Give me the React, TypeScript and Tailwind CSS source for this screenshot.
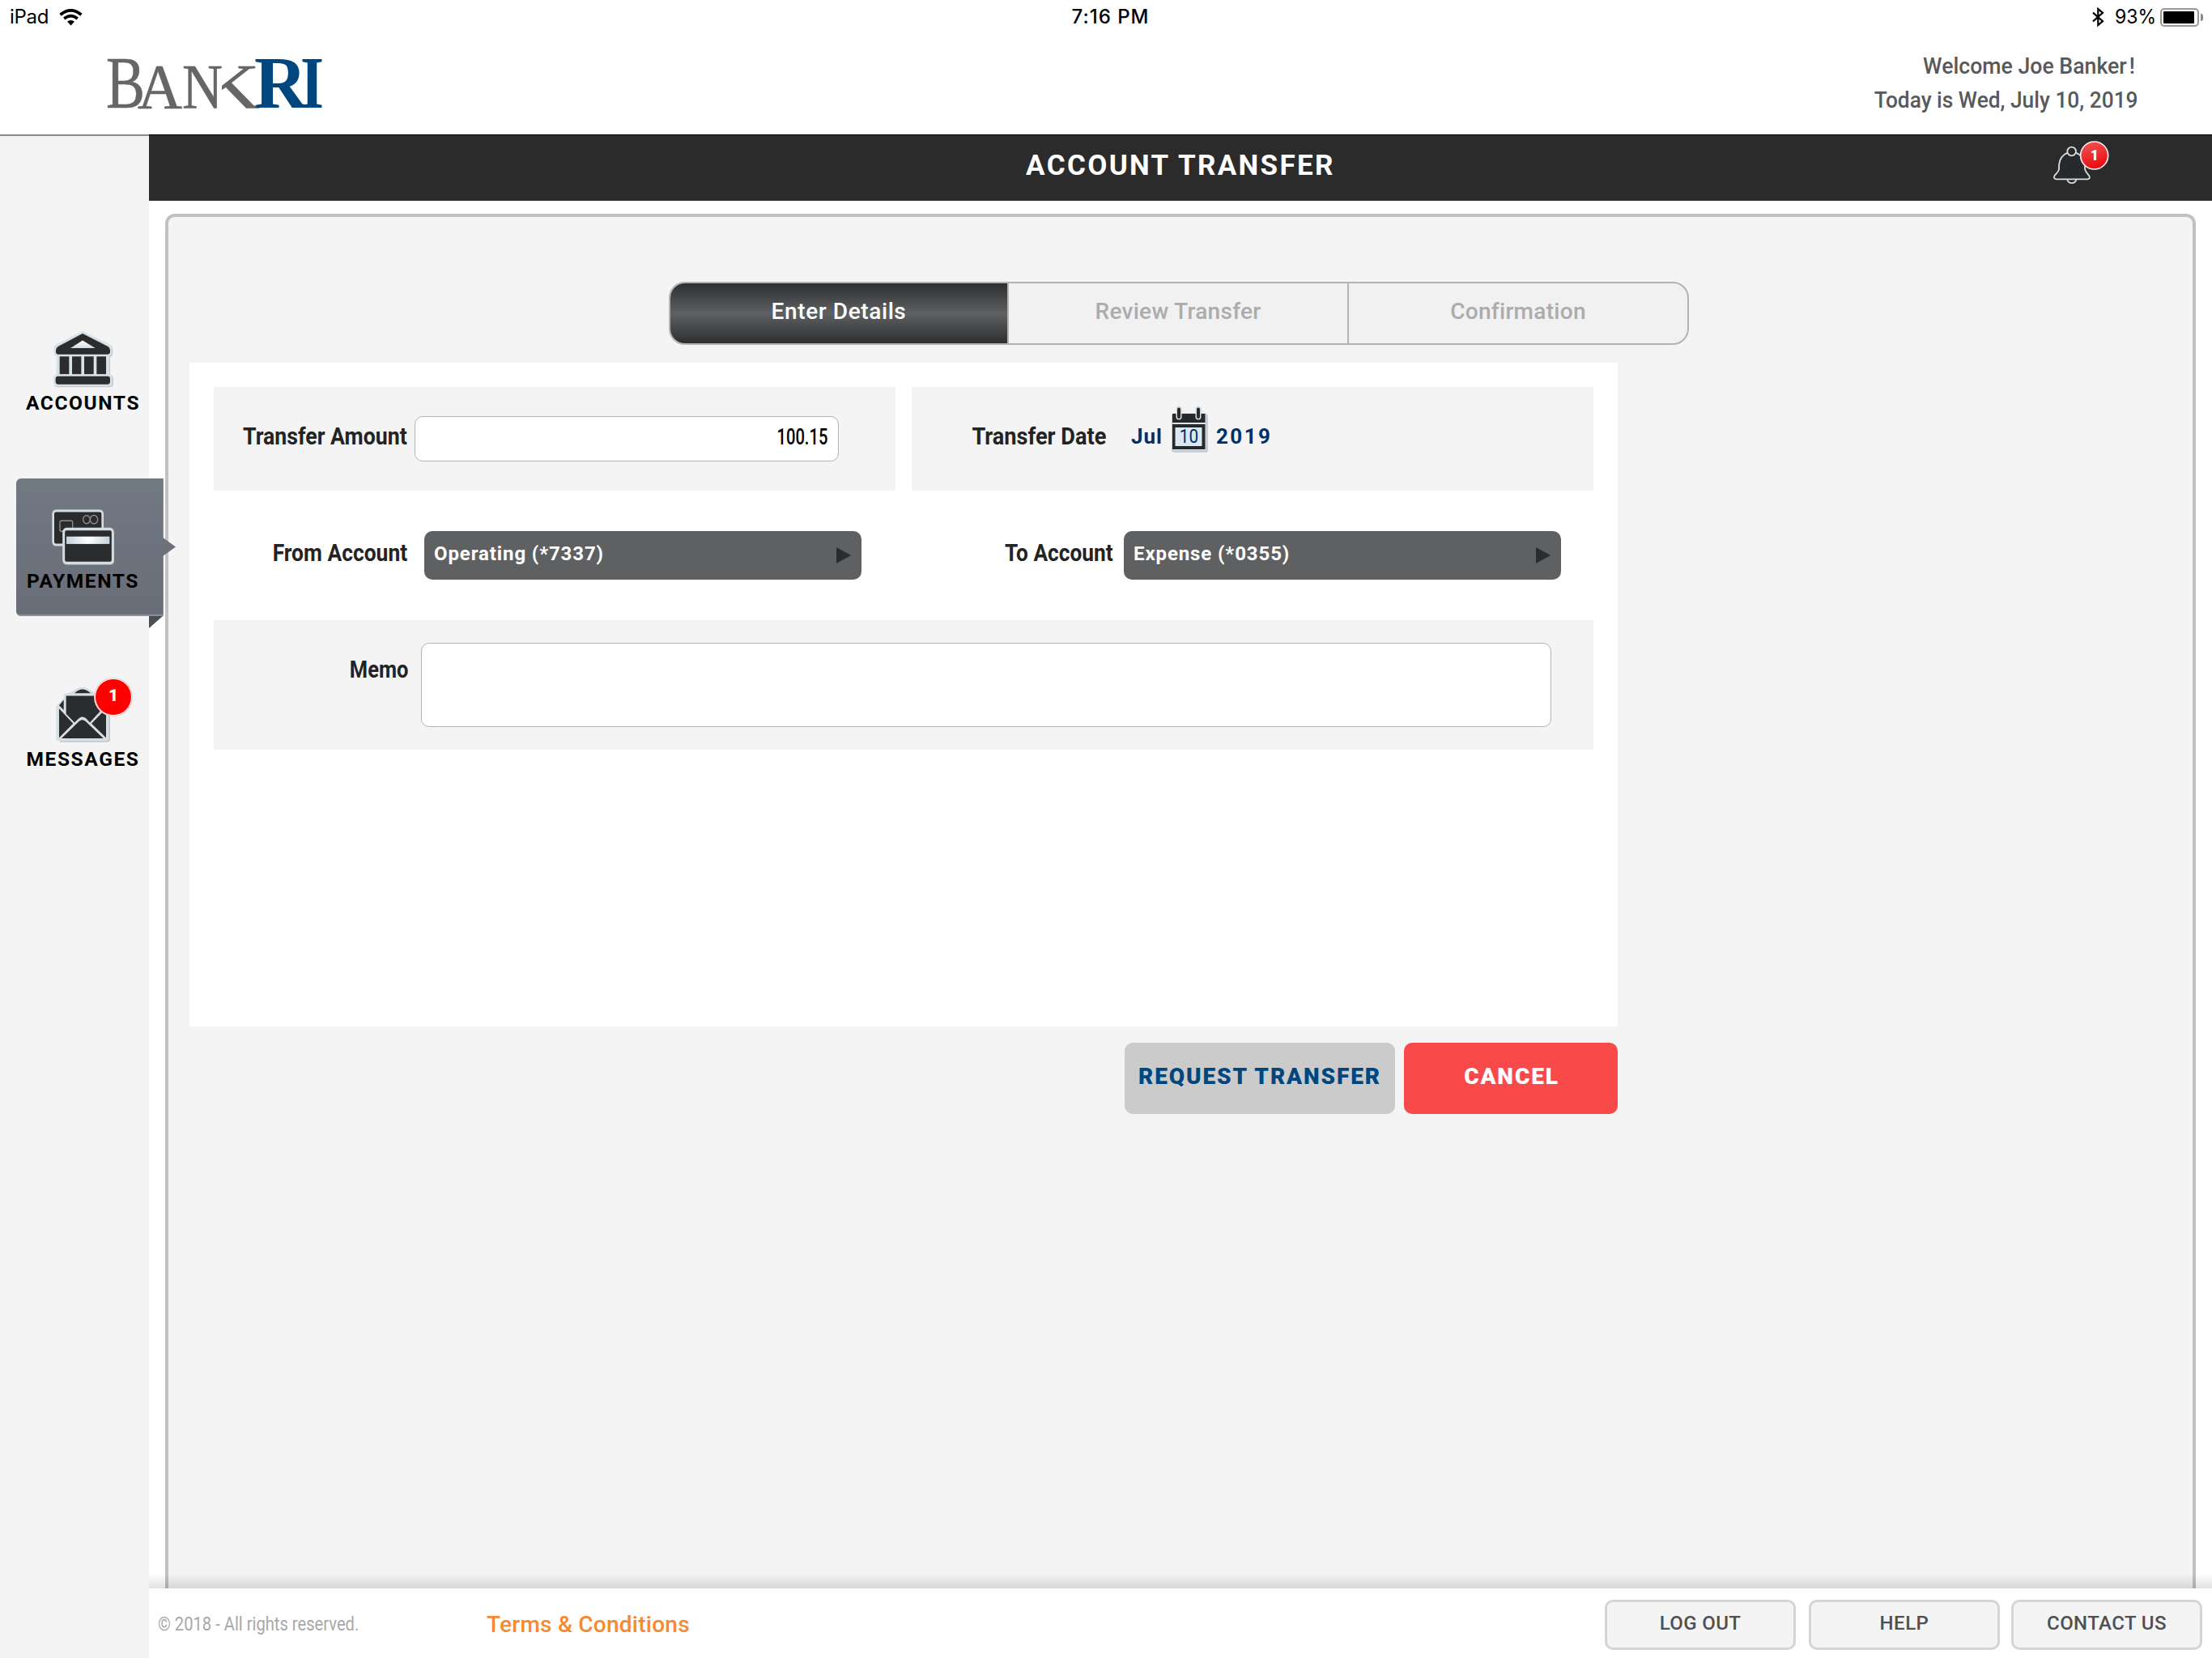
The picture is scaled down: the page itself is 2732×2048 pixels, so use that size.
import type { ReactNode } from "react";

function WifiIcon() {
  return (
    <svg className="block h-[21px] w-[29px]" viewBox="0 0 29 21" fill="none">
      <path d="M1.6 7.2 Q14.5 -3.4 27.4 7.2" stroke="#000" strokeWidth="3.8" />
      <path d="M6.2 12 Q14.5 5.2 22.8 12" stroke="#000" strokeWidth="3.6" />
      <path d="M10 15.6 Q14.5 12.2 19 15.6 L14.5 20.4 Z" fill="#000" />
    </svg>
  );
}

function BluetoothIcon() {
  return (
    <svg className="block h-6 w-[15px]" viewBox="0 0 15 24" fill="none" stroke="#000" strokeWidth="2.2">
      <path d="M1 6.6 L13 17.2 L7.3 22 V2 L13 6.8 L1 17.4" />
    </svg>
  );
}

function BatteryIcon() {
  return (
    <div className="flex items-center gap-[2px]">
      <div className="h-[23px] w-12 rounded-[5px] border-2 border-[#999] p-[2px]">
        <div className="h-full w-[38px] rounded-[1px] bg-black" />
      </div>
      <div className="h-[9px] w-[3px] rounded-r-full bg-[#888]" />
    </div>
  );
}

function Logo() {
  return (
    <svg className="block h-[114px] w-[300px]" viewBox="120 42 300 114">
      <defs>
        <clipPath id="karms">
          <path d="M274 100 L291 78 H330 V137 H296 L274 112 Z" />
        </clipPath>
      </defs>
      <g fontFamily="'Liberation Serif', serif" fill="#666666" stroke="#666666" strokeWidth="0.6">
        <text x="131" y="132.8" fontSize="92" textLength="48" lengthAdjust="spacingAndGlyphs">B</text>
        <text x="170" y="132.8" fontSize="78" textLength="55" lengthAdjust="spacingAndGlyphs">A</text>
        <text x="225" y="132.8" fontSize="78" textLength="50" lengthAdjust="spacingAndGlyphs">N</text>
        <g clipPath="url(#karms)">
          <text x="250" y="132.8" fontSize="78" textLength="71" lengthAdjust="spacingAndGlyphs">K</text>
        </g>
      </g>
      <g fontFamily="'Liberation Serif', serif" fontWeight="700" fill="#00467f">
        <text x="314" y="132.8" fontSize="92" textLength="65" lengthAdjust="spacingAndGlyphs">R</text>
        <text x="371" y="132.8" fontSize="92" textLength="29" lengthAdjust="spacingAndGlyphs">I</text>
      </g>
    </svg>
  );
}

function BankIcon() {
  return (
    <svg className="block h-[73.500px] w-20" viewBox="189 69 240 192" preserveAspectRatio="none">
      <defs>
        <linearGradient id="bankwin" x1="0" y1="0" x2="0" y2="1">
          <stop offset="0" stopColor="#fff" />
          <stop offset="1" stopColor="#cfdde4" />
        </linearGradient>
      </defs>
      <path
        d="M308 77 L408 119 Q418 125 418 134 V144 Q418 155 408 158 V215 Q420 218 420 228 V244 Q420 255 406 255 H214 Q200 255 200 244 V226 Q200 218 212 214 V156 Q201 152 201 142 V130 Q202 120 212 117 Z"
        fill="#c3c8cb"
      />
      <path
        d="M306 74 L404 116 Q415 121 415 132 V143 Q415 152 405 155 V214 Q416 217 416 226 V241 Q416 252 404 252 H210 Q198 252 198 241 V226 Q198 217 209 214 V155 Q199 152 199 142 V130 Q200 119 210 116 Z"
        fill="#d8e1e5"
      />
      <g fill="#2b2c2d">
        <path d="M306 82 L400 124 Q408 128 408 136 V141 Q408 149 400 149 H215 Q207 149 207 141 V136 Q207 128 215 124 Z" />
        <rect x="221" y="156" width="35" height="57" />
        <rect x="267" y="156" width="34" height="57" />
        <rect x="312" y="156" width="35" height="57" />
        <rect x="358" y="156" width="35" height="57" />
        <rect x="206" y="220" width="202" height="26" rx="9" />
      </g>
      <path d="M306 104 L353 129 H261 Z" fill="url(#bankwin)" />
    </svg>
  );
}

function CardsIcon() {
  return (
    <svg className="block h-[71px] w-20" viewBox="189 648 240 186" preserveAspectRatio="none">
      <defs>
        <linearGradient id="stripe" x1="0" y1="0" x2="1" y2="0">
          <stop offset="0" stopColor="#c4d2da" />
          <stop offset="0.5" stopColor="#fff" />
          <stop offset="1" stopColor="#c4d2da" />
        </linearGradient>
      </defs>
      <rect x="197" y="656" width="183" height="110" rx="10" fill="#2a2b2c" stroke="#d3dce1" strokeWidth="8" />
      <rect x="222" y="688" width="47" height="34" rx="5" fill="none" stroke="#8d8f91" strokeWidth="4" />
      <circle cx="321" cy="684" r="13" fill="none" stroke="#8d8f91" strokeWidth="4" />
      <circle cx="348" cy="684" r="14" fill="none" stroke="#8d8f91" strokeWidth="4" />
      <rect x="239" y="718" width="184" height="112" rx="11" fill="#9aa0a5" />
      <rect x="236" y="715" width="182" height="110" rx="10" fill="#2a2b2c" stroke="#d3dce1" strokeWidth="9" />
      <rect x="246" y="739" width="160" height="24" fill="url(#stripe)" />
    </svg>
  );
}

function MailIcon() {
  return (
    <svg className="block h-[83px] w-[100px]" viewBox="189 1192 300 216" preserveAspectRatio="none">
      <path d="M210 1288 L238 1262 V1250 L272 1238 Q306 1214 342 1240 L370 1250 L408 1292 V1392 Q408 1402 398 1402 H222 Z" fill="#c3c8cb" />
      <path d="M208 1288 L236 1260 V1247 L272 1240 Q305 1212 340 1240 L370 1247 L403 1288 V1388 Q403 1398 393 1398 H216 Q208 1398 208 1388 Z" fill="#d6dfe3" />
      <g fill="#2b2c2d">
        <path d="M276 1245 Q305 1220 336 1245 Z" />
        <path d="M219 1284 L236 1266 V1299 Z" />
        <path d="M245 1253 H370 V1304 L333 1339 L320 1327 Q305 1315 291 1327 L276 1339 L245 1311 Z" />
        <path d="M219 1294 L271 1342 L219 1388 Z" />
        <path d="M393 1294 L339 1342 L393 1388 Z" />
        <path d="M228 1390 L292 1336 Q305 1325 318 1336 L383 1390 Z" />
      </g>
    </svg>
  );
}

function BellIcon() {
  return (
    <svg className="block h-[58px] w-[72px]" viewBox="850 516 216 174">
      <defs>
        <linearGradient id="bellbadge" x1="0" y1="0" x2="0.3" y2="1">
          <stop offset="0" stopColor="#f4585a" />
          <stop offset="1" stopColor="#e90d12" />
        </linearGradient>
      </defs>
      <g fill="#27292b" stroke="#d5dde1" strokeWidth="5.5">
        <path d="M908 666 A17 16 0 0 0 941 666" />
        <path d="M909 566 Q880 578 877 612 V628 Q875 636 862 649 Q854 662 867 664 H983 Q996 662 987 649 Q975 636 973 626 V612 Q969 578 940 566" />
        <circle cx="924" cy="561" r="16" />
      </g>
      <circle cx="1008" cy="576" r="51" fill="url(#bellbadge)" stroke="#f7eeee" strokeWidth="5" />
      <text x="1009" y="595" textAnchor="middle" fontFamily="Roboto, sans-serif" fontWeight="900" fontSize="53" fill="#fff">
        1
      </text>
    </svg>
  );
}

function CalendarIcon() {
  return (
    <div className="relative h-[58px] w-[48px]">
      <svg className="block h-[58px] w-[48px]" viewBox="1446 501 48 58">
        <path d="M1449 511 H1453 V505 Q1456 500 1460 505 V510 H1477 V505 Q1481 500 1484 505 V511 H1490 Q1492 512 1492 516 V556 Q1492 559 1489 559 H1450 Q1447 558 1447 555 V514 Q1447 511 1449 511 Z" fill="#c6cdd4" />
        <path d="M1449 510 H1489 V556 H1449 Z" fill="#dce4ea" />
        <rect x="1448" y="511" width="40.5" height="11" fill="#28292b" />
        <rect x="1448" y="524" width="40.5" height="31" fill="#28292b" />
        <rect x="1451.5" y="528" width="33" height="23" fill="#dbe7f1" />
        <g stroke="#d5dce2" strokeWidth="7" strokeLinecap="round">
          <path d="M1456 505 V515" />
          <path d="M1480 505 V515" />
        </g>
        <g stroke="#28292b" strokeWidth="4" strokeLinecap="round">
          <path d="M1456 505.500 V515" />
          <path d="M1480 505.500 V515" />
        </g>
      </svg>
      <span className="absolute top-[27px] left-0 w-[45px] scale-x-90 text-center text-[23px] leading-6 font-normal tracking-normal">10</span>
    </div>
  );
}

function NavLabel({ children }: { children: ReactNode }) {
  return (
    <span className="flex w-[141px] justify-center text-[24.500px] leading-6 font-bold tracking-[1.6px] whitespace-nowrap text-black">
      {children}
    </span>
  );
}

function Sidebar() {
  return (
    <nav className="relative z-10 flex w-[184px] shrink-0 flex-col border-t-2 border-[#8c8c8c] bg-[#f4f4f4]">
      <a className="mt-[238.500px] flex flex-col pl-8">
        <span className="pl-[31px]">
          <BankIcon />
        </span>
        <span className="mt-[6px]">
          <NavLabel>ACCOUNTS</NavLabel>
        </span>
      </a>
      <div className="relative mt-[81px] ml-5 h-[170px] w-[182px] rounded-l-[6px] bg-linear-to-b from-[#717983] to-[#696d78] pt-[37px] shadow-[inset_-1px_-2px_0_#8b9098]">
        <div className="pl-[43px]">
          <CardsIcon />
        </div>
        <div className="mt-[7px] ml-3">
          <NavLabel>PAYMENTS</NavLabel>
        </div>
        <svg className="absolute top-[73px] left-[181px] h-[23px] w-4" viewBox="0 0 16 23">
          <path d="M0 0 L16 11.500 L0 23 Z" fill="#6c7079" />
        </svg>
        <svg className="absolute top-[170px] left-[164px] h-[15px] w-[17px]" viewBox="0 0 17 15">
          <path d="M0 0 H17 L0 15 Z" fill="#4b4e55" />
        </svg>
      </div>
      <a className="relative mt-[75px] flex flex-col pl-8">
        <span className="pl-[31px]">
          <MailIcon />
        </span>
        <span className="mt-[7px]">
          <NavLabel>MESSAGES</NavLabel>
        </span>
        <span className="absolute top-[2px] left-[117px] flex h-[46px] w-[46px] items-center justify-center rounded-full border border-white bg-[#fe0000] pb-1 text-[21px] leading-none font-black text-white shadow-[0_0_0_1px_#f9c9c9]">
          1
        </span>
      </a>
    </nav>
  );
}

function FieldLabel({ children, className }: { children: ReactNode; className: string }) {
  return (
    <div className={`flex shrink-0 justify-end text-[30px] leading-8 font-bold whitespace-nowrap text-[#232323] ${className}`}>
      {children}
    </div>
  );
}

function AccountSelect({ children }: { children: ReactNode }) {
  return (
    <div className="flex h-[60px] w-[540px] shrink-0 items-center justify-between rounded-[10px] bg-[#5f6062] pr-[13px] pl-3">
      <span className="pb-1 text-[24px] leading-none font-bold tracking-[0.9px] whitespace-nowrap text-white">{children}</span>
      <svg className="block h-5 w-[18px]" viewBox="0 0 18 20">
        <path d="M0 0 L18 10 L0 20 Z" fill="#2b2c2e" />
      </svg>
    </div>
  );
}

function FooterButton({ children, className }: { children: ReactNode; className: string }) {
  return (
    <button
      className={`flex h-[62px] w-[236px] items-center justify-center rounded-[10px] border-[3px] border-[#d5d5d5] bg-[#f4f4f4] pb-[5px] text-[24px] leading-none font-medium whitespace-nowrap text-[#4f5052] ${className}`}
    >
      {children}
    </button>
  );
}

export default function App() {
  return (
    <div className="flex h-[2048px] w-[2732px] flex-col overflow-hidden bg-white font-[Roboto,sans-serif]">
      <header className="flex h-[166px] shrink-0 flex-col">
        <div className="grid h-[42px] grid-cols-3 items-center font-[Inter,sans-serif] text-[24px] leading-6 text-black">
          <div className="flex items-center pl-3">
            <span className="w-[61px] tracking-[-0.3px]">iPad</span>
            <WifiIcon />
          </div>
          <span className="pl-[11px] text-center font-medium tracking-[1px]">7:16 PM</span>
          <div className="flex items-center justify-end pr-[11px]">
            <BluetoothIcon />
            <span className="mr-[3px] ml-[13px] origin-left scale-x-[0.96]">93%</span>
            <BatteryIcon />
          </div>
        </div>
        <div className="flex justify-between pr-[91px] pl-[120px]">
          <Logo />
          <div className="flex flex-col items-end pt-[26px] text-[27.500px] leading-[42px] font-medium text-[#58595b]">
            <span className="-mt-[7px] mr-[4px] origin-right scale-x-[0.97] whitespace-nowrap">
              Welcome Joe Banker<span className="pl-[3px]">!</span>
            </span>
            <span className="origin-right scale-x-[0.957] whitespace-nowrap">Today is Wed, July 10, 2019</span>
          </div>
        </div>
      </header>

      <div className="flex min-h-0 flex-1">
        <Sidebar />
        <div className="flex min-w-0 flex-1 flex-col">
          <div className="relative flex h-[82px] shrink-0 items-center justify-center border-t border-black bg-[#2b2b2b] pb-[6px]">
            <h1 className="text-[35px] leading-none font-bold tracking-[2.35px] text-white">ACCOUNT TRANSFER</h1>
            <div className="absolute top-[5px] right-[126px]">
              <BellIcon />
            </div>
          </div>

          <main className="mt-4 mr-5 ml-5 flex min-h-0 flex-1 flex-col rounded-t-[12px] border-4 border-b-0 border-[#c1c1c1] bg-[#f4f4f4]">
            <div className="mt-20 ml-[618px] grid h-[78px] w-[1260px] grid-cols-[418px_420px_1fr] overflow-hidden rounded-[20px] border-2 border-[#b3b3b3] bg-[#f1f1f1] text-[28px] leading-none font-medium tracking-[0.3px] text-[#acacac]">
              <div className="flex items-center justify-center border-r-2 border-[#b3b3b3] bg-linear-to-b from-[#2e2f31] via-[#5f6062] to-[#2e2f31] pb-[4px] tracking-[0.6px] text-white">
                Enter Details
              </div>
              <div className="flex items-center justify-center border-r-2 border-[#b3b3b3] pb-[4px]">Review Transfer</div>
              <div className="flex items-center justify-center pb-[4px]">Confirmation</div>
            </div>

            <section className="mt-[22px] ml-[26px] h-[820px] w-[1764px] shrink-0 bg-white px-[30px] pt-[30px]">
              <div className="grid h-32 grid-cols-2 gap-5">
                <div className="flex items-start bg-[#f4f4f4] pt-9">
                  <FieldLabel className="mt-[9px] w-[239px]">
                    <span className="origin-right scale-x-[0.89]">Transfer Amount</span>
                  </FieldLabel>
                  <div className="ml-[9px] flex h-14 w-[524px] items-center justify-end rounded-[10px] border border-[#b3b3b3] bg-white pr-[13px] pb-1 text-[28px] leading-none font-medium text-black">
                    <span className="origin-right scale-x-[0.72]">100.15</span>
                  </div>
                </div>
                <div className="flex items-start bg-[#f4f4f4]">
                  <FieldLabel className="mt-[45px] w-[240px]">
                    <span className="origin-right scale-x-[0.905]">Transfer Date</span>
                  </FieldLabel>
                  <div className="mt-[23px] ml-[31px] flex text-[26px] font-bold text-[#012f68]">
                    <span className="mt-[22px] w-[49px] leading-8 tracking-[1px]">Jul</span>
                    <CalendarIcon />
                    <span className="mt-[22px] ml-[8px] leading-8 tracking-[2.4px]">2019</span>
                  </div>
                </div>
              </div>

              <div className="mt-[50px] flex h-[60px] items-start">
                <FieldLabel className="mt-[11px] w-[239px]">
                  <span className="origin-right scale-x-[0.88]">From Account</span>
                </FieldLabel>
                <div className="ml-[21px]">
                  <AccountSelect>Operating (*7337)</AccountSelect>
                </div>
                <FieldLabel className="mt-[11px] w-[311px]">
                  <span className="origin-right scale-x-[0.875]">To Account</span>
                </FieldLabel>
                <div className="ml-[13px]">
                  <AccountSelect>Expense (*0355)</AccountSelect>
                </div>
              </div>

              <div className="mt-[50px] flex h-40 items-start bg-[#f4f4f4] pt-7">
                <FieldLabel className="mt-[17px] w-[240px]">
                  <span className="origin-right scale-x-[0.85]">Memo</span>
                </FieldLabel>
                <div className="ml-4 h-[104px] w-[1396px] rounded-[10px] border border-[#b3b3b3] bg-white" />
              </div>
            </section>

            <div className="mt-5 ml-[26px] flex w-[1764px] shrink-0 justify-end gap-[11px] text-[28px] leading-none font-black tracking-[1.9px]">
              <button className="flex h-[88px] w-[334px] items-center justify-center rounded-[10px] bg-[#cbcbcb] pb-[4px] whitespace-nowrap text-[#00467f]">
                REQUEST TRANSFER
              </button>
              <button className="flex h-[88px] w-[264px] items-center justify-center rounded-[10px] bg-[#f84a4b] pb-[4px] pl-[2px] text-white">
                CANCEL
              </button>
            </div>
            <div className="-mr-6 -ml-6 mt-auto h-[18px] bg-linear-to-b from-black/0 to-black/12" />
          </main>

          <footer className="flex h-[86px] shrink-0 items-start bg-white pr-3 pl-[11px]">
            <span className="mt-[30px] w-[406px] text-[24px] leading-7 whitespace-nowrap text-[#a8a8a8]">
              <span className="inline-block origin-left scale-x-[0.84]">© 2018 - All rights reserved.</span>
            </span>
            <a className="mt-[27px] text-[28px] leading-9 font-medium tracking-[0.25px] whitespace-nowrap text-[#f58a33]">Terms &amp; Conditions</a>
            <div className="mt-[14px] ml-auto flex">
              <FooterButton className="mr-4 tracking-[0.4px]">LOG OUT</FooterButton>
              <FooterButton className="mr-[14px] tracking-[0.5px]">HELP</FooterButton>
              <FooterButton className="tracking-[0.4px]">CONTACT US</FooterButton>
            </div>
          </footer>
        </div>
      </div>
    </div>
  );
}
